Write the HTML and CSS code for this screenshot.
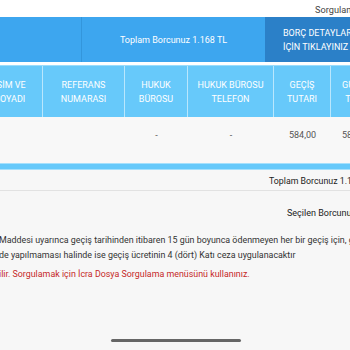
FILE: index.html
```html
<!DOCTYPE html>
<html lang="tr">
<head>
<meta charset="utf-8">
<link rel="stylesheet" href="styles.css">
</head>
<body>
<div class="page">
  <div class="top"><span>Sorgulama Sonuçları</span></div>
  <div class="summary">
    <div class="s-cell s-left"></div>
    <div class="s-cell s-total">Toplam Borcunuz 1.168 TL</div>
    <div class="s-cell s-detail">BORÇ DETAYLARI<br>İÇİN TIKLAYINIZ</div>
  </div>
  <div class="gap"></div>
  <div class="thead">
    <div class="c c1">İSİM VE<br>SOYADI</div>
    <div class="c c2">REFERANS<br>NUMARASI</div>
    <div class="c c3">HUKUK<br>BÜROSU</div>
    <div class="c c4">HUKUK BÜROSU<br>TELEFON</div>
    <div class="c c5">GEÇİŞ<br>TUTARI</div>
    <div class="c c6">GÜNCEL<br>TUTAR</div>
  </div>
  <div class="trow">
    <div class="c c1"></div>
    <div class="c c2"></div>
    <div class="c c3">-</div>
    <div class="c c4">-</div>
    <div class="c c5">584,00</div>
    <div class="c c6">584,00</div>
  </div>
  <div class="stripe"></div>
  <div class="total">Toplam Borcunuz 1.168 TL</div>
  <div class="selected">Seçilen Borcunuz 0 TL</div>
  <div class="notes">
    <p class="note">Maddesi uyarınca geçiş tarihinden itibaren 15 gün boyunca ödenmeyen her bir geçiş için, geçiş ücreti</p>
    <p class="note">de yapılmaması halinde ise geçiş ücretinin 4 (dört) Katı ceza uygulanacaktır</p>
    <p class="note warn">ilir. Sorgulamak için İcra Dosya Sorgulama menüsünü kullanınız.</p>
  </div>
</div>
<div class="home"></div>
</body>
</html>
```
FILE: styles.css
```css
html, body {
  margin: 0;
  padding: 0;
  width: 350px;
  height: 350px;
  overflow: hidden;
  background: #f7f7f7;
  font-family: Roboto, "Noto Sans", sans-serif;
}
.page {
  width: 350px;
  overflow: hidden;
}
.top {
  height: 17px;
  background: #fff;
  padding-left: 315px;
  font-size: 9.2px;
  line-height: 19px;
  color: #444;
  white-space: nowrap;
  overflow: hidden;
}
.summary {
  display: flex;
  height: 45px;
  background: #3da6ef;
  color: #fff;
  font-size: 9px;
  white-space: nowrap;
}
.s-cell {
  flex: none;
  display: flex;
  align-items: center;
}
.s-left {
  width: 81px;
  border-right: 1px solid #3396dc;
}
.s-total {
  width: 183px;
  justify-content: center;
}
.s-detail {
  width: 120px;
  background: #2b80c8;
  padding-left: 18px;
  line-height: 14px;
}
.gap {
  height: 3px;
  background: #fff;
}
.thead, .trow {
  display: flex;
  white-space: nowrap;
}
.thead {
  height: 51px;
  background: #67c9fa;
  color: #fff;
  font-size: 9px;
  line-height: 14px;
  border-top: 1px solid #9adcfc;
}
.c {
  flex: none;
  display: flex;
  align-items: center;
  justify-content: center;
  text-align: center;
  box-sizing: border-box;
}
.thead .c { border-right: 1px solid #b9e7fd; }
.c1 { width: 65px; margin-left: -22px; }
.c2 { width: 82px; }
.c3 { width: 63px; }
.c4 { width: 86px; }
.c5 { width: 57px; }
.c6 { width: 60px; justify-content: flex-start; padding-left: 11px; }
.trow {
  height: 46px;
  background: #f8f8f8;
  color: #555;
  font-size: 9px;
}
.trow .c { padding-bottom: 10px; }
.stripe {
  height: 5px;
  background: #66c9fa;
  border-top: 1px solid #a6e0fc;
  border-bottom: 1px solid #a6e0fc;
}
.total {
  height: 20px;
  line-height: 22px;
  padding-left: 269px;
  font-size: 8.8px;
  color: #222;
  white-space: nowrap;
  border-bottom: 1px solid #e2e2e2;
}
.selected {
  padding-left: 287px;
  margin-top: 15px;
  font-size: 9px;
  line-height: 14px;
  color: #222;
  white-space: nowrap;
}
.notes {
  margin-top: 13px;
  margin-left: -1px;
}
.note {
  margin: 0;
  font-size: 8.9px;
  line-height: 15px;
  color: #333;
  white-space: nowrap;
}
.warn {
  margin-top: 4px;
  color: #c62828;
}
.home {
  position: absolute;
  left: 111px;
  top: 339px;
  width: 130px;
  height: 3px;
  border-radius: 2px;
  background: #666;
}
```
